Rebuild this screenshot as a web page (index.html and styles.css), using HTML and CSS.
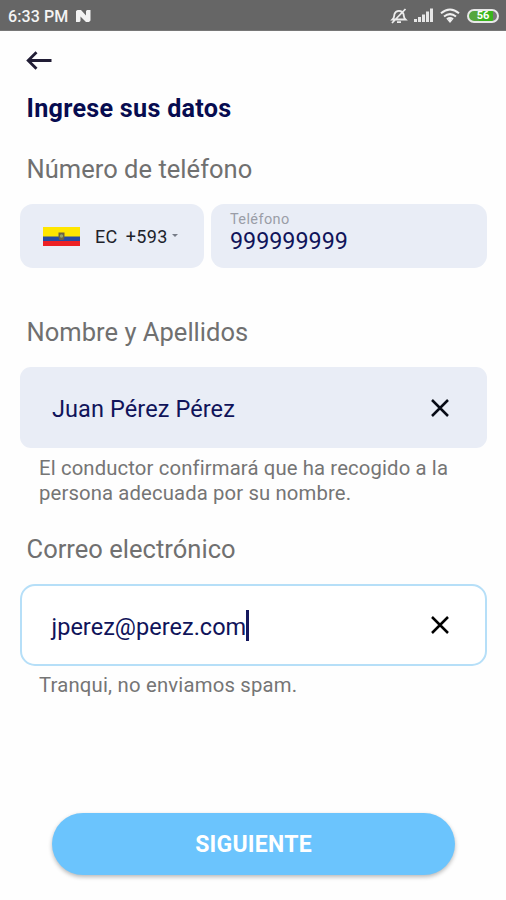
FILE: index.html
```html
<!DOCTYPE html>
<html lang="es">
<head>
<meta charset="utf-8">
<title>Ingrese sus datos</title>
<link rel="stylesheet" href="styles.css">
</head>
<body>
<div class="status">
  <span class="time">6:33 PM</span>
  <svg class="notif" width="15" height="12" viewBox="0 0 15 12" fill="#f2f2f2"><path d="M0 1 1.500 0H5l5 5.500V1l1-1h3.500v10.500L13 12h-3L4.500 6.500V11l-1 1H0z"/></svg>
  <div class="indicators">
    <svg width="18" height="16" viewBox="0 0 18 16" fill="none" stroke="#ececec" stroke-width="1.800"><path d="M2 11.500h14M2.500 11.500c2-1.800 1.500-3.500 2-5.500C5.100 4 6.500 2.800 9 2.800S12.900 4 13.500 6c.5 2 0 3.700 2 5.500zM7 14.200h4M15.500 1 2 15"/></svg>
    <svg width="20" height="15" viewBox="0 0 20 15" fill="#e6e6e6"><path d="M0 11h3v3H0zM4 9h3v5H4zM8 6.500h3V14H8zM12 3.500h3V14h-3zM16 .5h3V14h-3z"/></svg>
    <svg width="20" height="15" viewBox="0 0 20 15" fill="none" stroke="#f0f0f0" stroke-width="2"><path d="M1 5.300Q10-2.300 19 5.300M4 8.500q6-4.800 12 0M6.900 11.300q3.100-2.400 6.200 0"/><path fill="#f0f0f0" stroke="none" d="m7.500 12 2.500-1.500 2.500 1.500-2.500 3z"/></svg>
    <div class="battery"><span>56</span></div>
  </div>
</div>
<main>
  <svg class="back" width="26" height="19" viewBox="0 0 26 19" fill="none" stroke="#211d35" stroke-width="2.800"><path d="M25.500 9.500H2.500M10.500 1.300 2.200 9.500l8.300 8.200"/></svg>
  <h1>Ingrese sus datos</h1>
  <h2 class="l-phone">Número de teléfono</h2>
  <div class="phone">
    <div class="country">
      <svg class="flag" width="37" height="19" viewBox="0 0 37 19"><path fill="#ffe600" d="M0 0h37v10H0z"/><path fill="#284aa0" d="M0 9.500h37V14H0z"/><path fill="#ed2024" d="M0 14h37v5H0z"/><path fill="#6c6342" d="M15.500 5.500h6V10l-1 3h-4l-1-3z"/><circle cx="18.500" cy="9" r="1.700" fill="#94a66e"/></svg>
      <span class="iso">EC</span><span class="code">+593</span><i class="caret"></i>
    </div>
    <div class="number"><small>Teléfono</small><span>999999999</span></div>
  </div>
  <h2 class="l-name">Nombre y Apellidos</h2>
  <div class="field"><span class="v-name">Juan Pérez Pérez</span>
    <svg width="18" height="18" viewBox="0 0 18 18" fill="none" stroke="#080b16" stroke-width="2.500"><path d="m1 1 16 16M17 1 1 17"/></svg></div>
  <p class="h-name">El conductor confirmará que ha recogido a la<br>persona adecuada por su nombre.</p>
  <h2 class="l-mail">Correo electrónico</h2>
  <div class="field active"><span class="v-mail">jperez@perez.com</span><i class="cursor"></i>
    <svg width="18" height="18" viewBox="0 0 18 18" fill="none" stroke="#000" stroke-width="2.500"><path d="m1 1 16 16M17 1 1 17"/></svg></div>
  <p class="h-mail">Tranqui, no enviamos spam.</p>
  <button type="button">SIGUIENTE</button>
</main>
</body>
</html>
```

FILE: styles.css
```css
* { box-sizing: border-box; }
body { margin: 0; height: 900px; overflow: hidden; background: #fefefe; font-family: Roboto, "Liberation Sans", sans-serif; }
.status { display: flex; align-items: center; height: 31px; padding: 1px 7px 0 8px; background: #666; color: #f4f4f4; border-bottom: 1px solid #777; }
.time { font-size: 16px; font-weight: 500; line-height: 20px; letter-spacing: .1px; padding-top: 2px; }
.notif { margin-left: 8px; }
.indicators { display: flex; align-items: center; margin-left: auto; gap: 7px; }
.indicators svg + svg { margin-left: -1px; }
.battery { width: 32px; height: 14px; border: 2px solid #e8e8e8; border-radius: 7px; background: linear-gradient(90deg, #55a63e 0 10px, #39b51c 10px 24px, #777 24px); color: #fff; font-size: 11px; font-weight: 700; line-height: 10px; text-align: center; }
main { display: flex; flex-direction: column; padding: 0 19px 0 20px; }
.back { margin: 20px 0 0 6px; flex: none; }
h1, h2, p { margin: 0; white-space: nowrap; }
h1 { margin: 24px 0 0 6.500px; font-size: 25.200px; line-height: 30px; font-weight: 700; letter-spacing: .26px; color: #070c50; }
h2 { margin-left: 6.500px; font-size: 25.5px; line-height: 30px; font-weight: 400; letter-spacing: .03px; color: #707070; }
.l-phone { margin-top: 30px; }
.phone { display: flex; gap: 7px; height: 64px; margin-top: 20px; }
.country, .number { border-radius: 13px; background: #e9edf6; }
.country { display: flex; align-items: center; width: 184px; padding: 1px 0 0 23px; font-size: 18px; color: #20222a; }
.iso { margin-left: 15px; letter-spacing: .2px; }
.code { margin-left: 8.500px; letter-spacing: .3px; }
.caret { margin: -2px 0 0 4px; border: 3px solid transparent; border-top-color: #777c87; border-bottom: 0; }
.number { display: flex; flex: 1; flex-direction: column; padding: 7px 19px; }
.number small { font-size: 14.5px; line-height: 17px; letter-spacing: .4px; color: #9a9da7; }
.number span { font-size: 23.300px; line-height: 27px; color: #10145a; }
.l-name { margin-top: 49px; }
.field { display: flex; align-items: center; height: 81px; margin-top: 20px; padding: 0 38px 0 32px; border-radius: 11px; background: #e9edf6; color: #10145a; font-size: 23.500px; }
.v-name { padding-top: 2px; letter-spacing: .1px; }
.field svg { margin: 0 0 0 auto; }
.active { height: 82px; border: 2px solid #b6dff8; border-radius: 15px; background: #fff; padding: 0 36px 0 29.500px; }
.v-mail { padding-top: 3px; letter-spacing: .03px; }
.cursor { width: 3px; height: 31px; margin-top: 1px; background: #15185e; }
p { margin-left: 19px; font-size: 20.300px; line-height: 24.500px; letter-spacing: .13px; color: #757575; }
.h-name { margin-top: 8px; }
.l-mail { margin-top: 29px; }
.h-mail { margin-top: 7px; letter-spacing: .2px; }
.l-mail + .field { margin-top: 20px; }
button { height: 62px; margin: 115.500px 32px 0 32px; padding: 2px 0 0; border: 0; border-radius: 31px; background: #6bc4fd; color: #fff; font: 700 23px/28px Roboto, sans-serif; letter-spacing: .25px; box-shadow: 0 2px 4px rgba(0, 0, 0, .28); }
```
